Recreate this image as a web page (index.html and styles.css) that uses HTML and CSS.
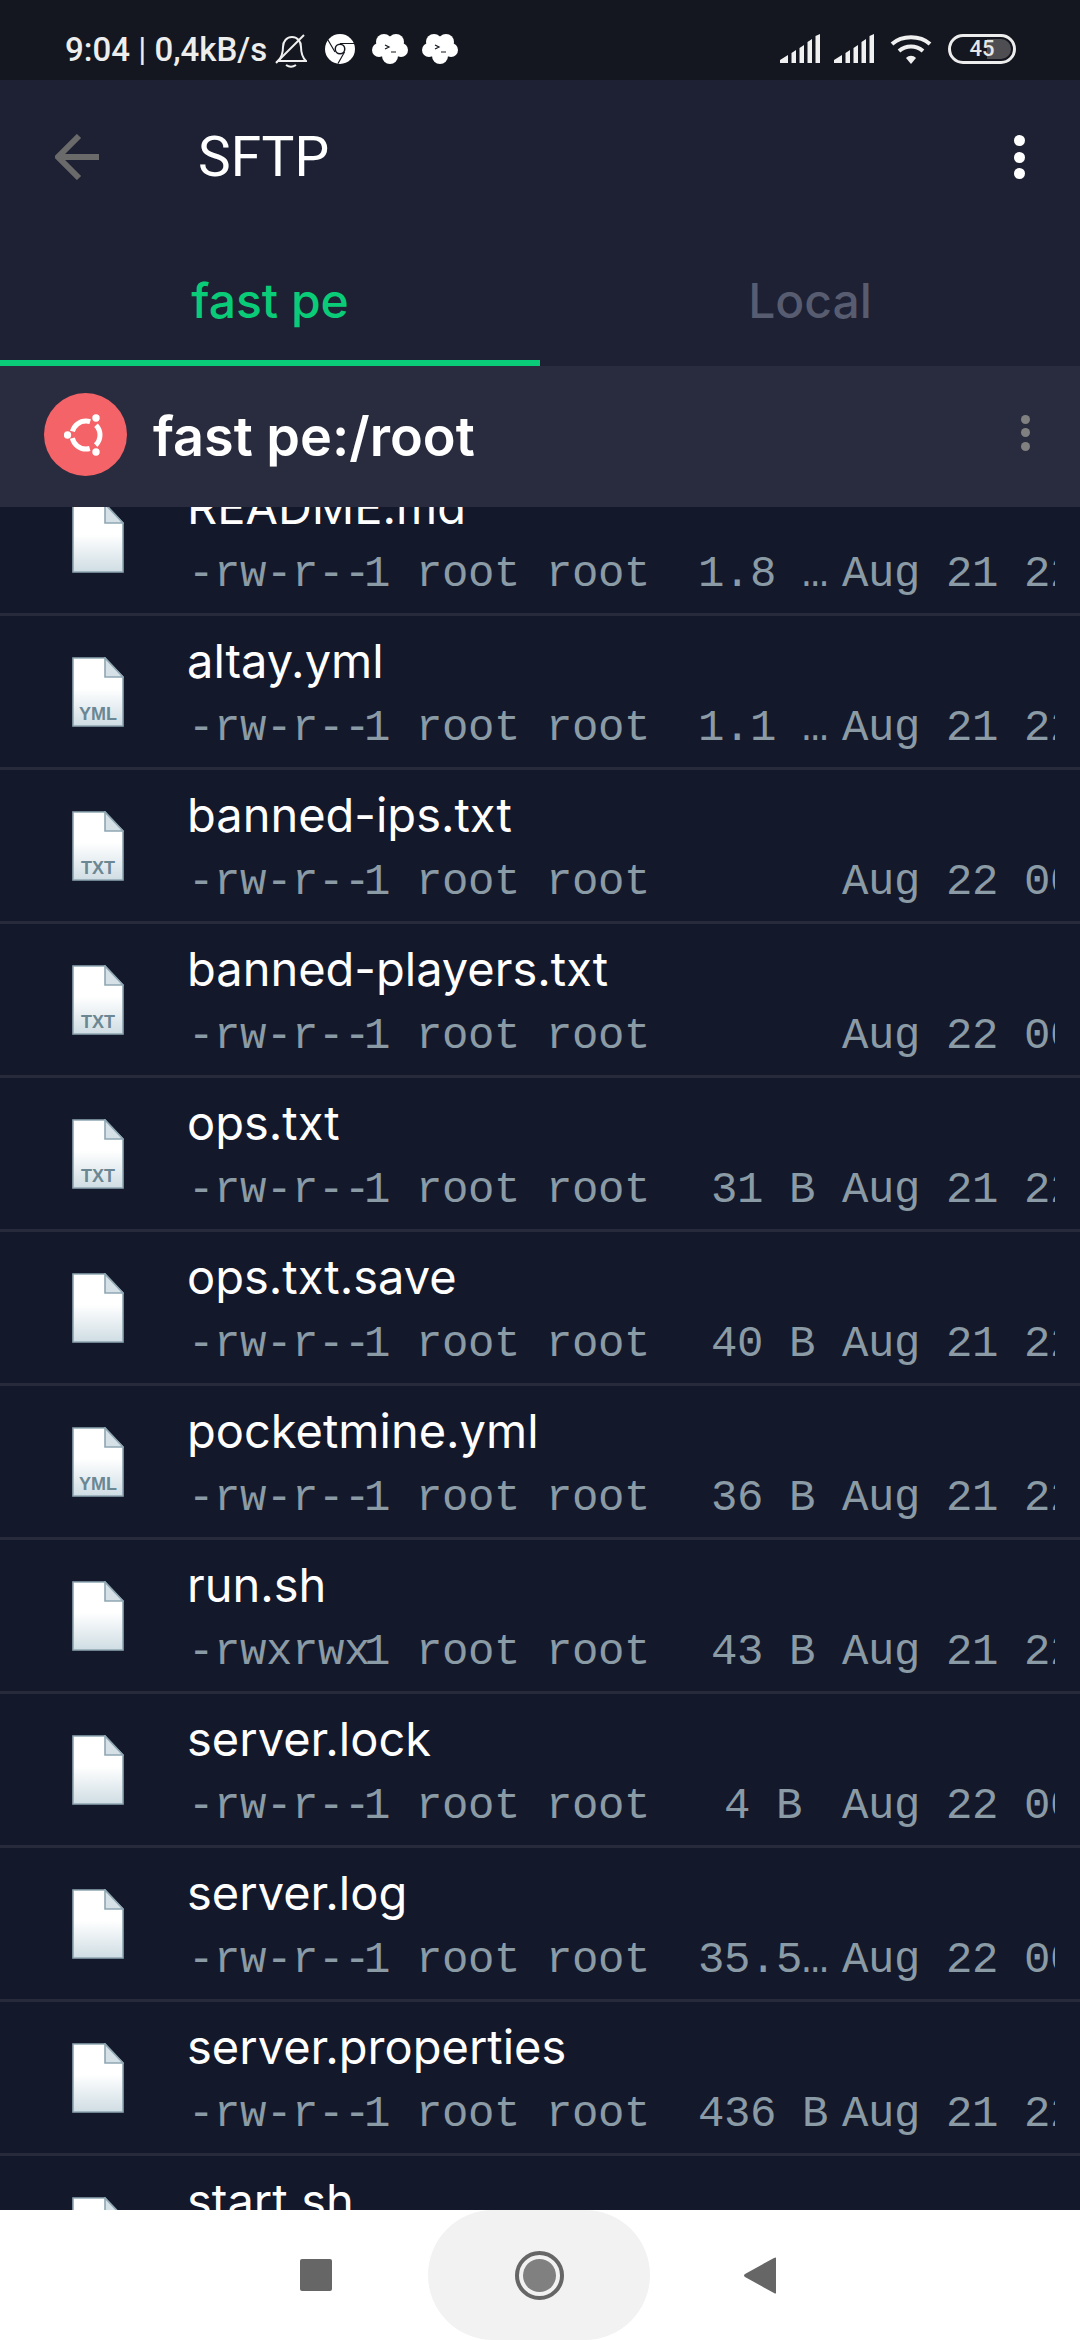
FILE: index.html
```html
<!DOCTYPE html>
<html lang="en">
<head>
    <meta charset="UTF-8">
    <meta name="viewport" content="width=device-width, initial-scale=1.0">
    <title>SFTP</title>
    <link rel="stylesheet" href="styles.css">
</head>
<body>
    <svg class="defs" width="0" height="0">
        <defs>
            <linearGradient id="paper" x1="0" y1="0" x2="0" y2="1">
                <stop offset="0.45" stop-color="#ffffff"/>
                <stop offset="1" stop-color="#cfdde3"/>
            </linearGradient>
            <symbol id="file" viewBox="0 0 52 70">
                <path d="M1 1H33L51 20V69H1Z" fill="url(#paper)" stroke="#8fa6b2" stroke-width="1.6"/>
                <path d="M33 1V20H51Z" fill="#d5e1e6" stroke="#8fa6b2" stroke-width="1.6"/>
            </symbol>
            <symbol id="cloud" viewBox="0 0 36 30">
                <circle cx="12" cy="8" r="8" fill="#fff"/>
                <circle cx="24" cy="8" r="8" fill="#fff"/>
                <circle cx="7" cy="16" r="7" fill="#fff"/>
                <circle cx="29" cy="16" r="7" fill="#fff"/>
                <circle cx="18" cy="22" r="8" fill="#fff"/>
                <circle cx="18" cy="15" r="9" fill="#fff"/>
                <path d="M13 11l4 2l-4 2M19 18h5" fill="none" stroke="#14171f" stroke-width="1.2"/>
            </symbol>
            <symbol id="signal" viewBox="0 0 40 29">
                <path d="M0 29V26L8 21V29ZM11.500 29V19L16 16V29ZM19.500 29V14L24 11V29ZM27.500 29V8L32 5V29ZM35.500 29V2L40 0V29Z" fill="#f0f0f0"/>
            </symbol>
        </defs>
    </svg>

    <div class="status-bar">
        <div class="status-left">
            <span class="status-text">9:04 <i>|</i> 0,4kB/s</span>
            <svg class="ic-bell" viewBox="0 0 32 34"><path d="M3 27c4-4 5-8 5-14c0-6 4-10 9-10s9 4 9 10c0 6 1 10 5 14Z M11 31c3 2 7 2 10 0" fill="none" stroke="#f0f0f0" stroke-width="2"/><path d="M1 29L29 1" stroke="#f0f0f0" stroke-width="2"/></svg>
            <svg class="ic-chrome" viewBox="0 0 30 30">
                <circle cx="15" cy="15" r="15" fill="#fff"/>
                <circle cx="15" cy="15" r="5.500" fill="#14171f"/>
                <circle cx="15" cy="15" r="4" fill="#fff"/>
                <path d="M15 9.500H29M10 18L3 6M19.500 18L13 29.500" stroke="#14171f" stroke-width="1.200"/>
            </svg>
            <svg class="ic-cloud"><use href="#cloud"/></svg>
            <svg class="ic-cloud"><use href="#cloud"/></svg>
        </div>
        <div class="status-right">
            <svg class="ic-signal"><use href="#signal"/></svg>
            <svg class="ic-signal"><use href="#signal"/></svg>
            <svg class="ic-wifi" viewBox="0 0 42 30">
                <path d="M2 10C12 1 30 1 40 10M9 17C16 11 26 11 33 17" fill="none" stroke="#f0f0f0" stroke-width="4"/>
                <path d="M16 24C19 21 23 21 26 24L21 30Z" fill="#f0f0f0"/>
            </svg>
            <div class="battery"><div class="battery-fill"></div><span>45</span></div>
        </div>
    </div>

    <header class="app-bar">
        <svg class="ic-back" viewBox="0 0 44 46"><path d="M44 23H4M24 2L3 23L24 44" fill="none" stroke="#6a6a6a" stroke-width="6"/></svg>
        <h1>SFTP</h1>
        <div class="dots dots-white"><b></b><b></b><b></b></div>
    </header>

    <nav class="tabs">
        <div class="tab tab-active">fast pe</div>
        <div class="tab">Local</div>
    </nav>

    <div class="path-bar">
        <div class="os-badge">
            <svg viewBox="0 0 44 44" width="44" height="44">
                <circle cx="22" cy="22" r="14" fill="none" stroke="#fff" stroke-width="5" stroke-dasharray="22.500 6.800" stroke-dashoffset="-18"/>
                <circle cx="3.500" cy="22" r="3.700" fill="#fff"/>
                <circle cx="32" cy="5" r="3.700" fill="#fff"/>
                <circle cx="32" cy="39" r="3.700" fill="#fff"/>
            </svg>
        </div>
        <div class="path-text">fast pe:/root</div>
        <div class="dots dots-grey"><b></b><b></b><b></b></div>
    </div>

    <main class="file-list">
        <div class="file-row">
            <div class="file-icon"><svg><use href="#file"/></svg></div>
            <div class="file-info">
                <div class="file-name">README.md</div>
                <div class="file-meta"><span class="perm">-rw-r--</span><span class="links">1</span><span class="owner">root root</span><span class="size">1.8 …</span><span class="date">Aug 21 22:14</span></div>
            </div>
        </div>
        <div class="file-row">
            <div class="file-icon"><svg><use href="#file"/></svg><span>YML</span></div>
            <div class="file-info">
                <div class="file-name">altay.yml</div>
                <div class="file-meta"><span class="perm">-rw-r--</span><span class="links">1</span><span class="owner">root root</span><span class="size">1.1 …</span><span class="date">Aug 21 22:14</span></div>
            </div>
        </div>
        <div class="file-row">
            <div class="file-icon"><svg><use href="#file"/></svg><span>TXT</span></div>
            <div class="file-info">
                <div class="file-name">banned-ips.txt</div>
                <div class="file-meta"><span class="perm">-rw-r--</span><span class="links">1</span><span class="owner">root root</span><span class="size"></span><span class="date">Aug 22 00:14</span></div>
            </div>
        </div>
        <div class="file-row">
            <div class="file-icon"><svg><use href="#file"/></svg><span>TXT</span></div>
            <div class="file-info">
                <div class="file-name">banned-players.txt</div>
                <div class="file-meta"><span class="perm">-rw-r--</span><span class="links">1</span><span class="owner">root root</span><span class="size"></span><span class="date">Aug 22 00:14</span></div>
            </div>
        </div>
        <div class="file-row">
            <div class="file-icon"><svg><use href="#file"/></svg><span>TXT</span></div>
            <div class="file-info">
                <div class="file-name">ops.txt</div>
                <div class="file-meta"><span class="perm">-rw-r--</span><span class="links">1</span><span class="owner">root root</span><span class="size">31 B</span><span class="date">Aug 21 22:14</span></div>
            </div>
        </div>
        <div class="file-row">
            <div class="file-icon"><svg><use href="#file"/></svg></div>
            <div class="file-info">
                <div class="file-name">ops.txt.save</div>
                <div class="file-meta"><span class="perm">-rw-r--</span><span class="links">1</span><span class="owner">root root</span><span class="size">40 B</span><span class="date">Aug 21 22:14</span></div>
            </div>
        </div>
        <div class="file-row">
            <div class="file-icon"><svg><use href="#file"/></svg><span>YML</span></div>
            <div class="file-info">
                <div class="file-name">pocketmine.yml</div>
                <div class="file-meta"><span class="perm">-rw-r--</span><span class="links">1</span><span class="owner">root root</span><span class="size">36 B</span><span class="date">Aug 21 22:14</span></div>
            </div>
        </div>
        <div class="file-row">
            <div class="file-icon"><svg><use href="#file"/></svg></div>
            <div class="file-info">
                <div class="file-name">run.sh</div>
                <div class="file-meta"><span class="perm">-rwxrwx</span><span class="links">1</span><span class="owner">root root</span><span class="size">43 B</span><span class="date">Aug 21 22:14</span></div>
            </div>
        </div>
        <div class="file-row">
            <div class="file-icon"><svg><use href="#file"/></svg></div>
            <div class="file-info">
                <div class="file-name">server.lock</div>
                <div class="file-meta"><span class="perm">-rw-r--</span><span class="links">1</span><span class="owner">root root</span><span class="size">4 B</span><span class="date">Aug 22 00:14</span></div>
            </div>
        </div>
        <div class="file-row">
            <div class="file-icon"><svg><use href="#file"/></svg></div>
            <div class="file-info">
                <div class="file-name">server.log</div>
                <div class="file-meta"><span class="perm">-rw-r--</span><span class="links">1</span><span class="owner">root root</span><span class="size">35.5…</span><span class="date">Aug 22 00:14</span></div>
            </div>
        </div>
        <div class="file-row">
            <div class="file-icon"><svg><use href="#file"/></svg></div>
            <div class="file-info">
                <div class="file-name">server.properties</div>
                <div class="file-meta"><span class="perm">-rw-r--</span><span class="links">1</span><span class="owner">root root</span><span class="size">436 B</span><span class="date">Aug 21 22:14</span></div>
            </div>
        </div>
        <div class="file-row">
            <div class="file-icon"><svg><use href="#file"/></svg></div>
            <div class="file-info">
                <div class="file-name">start.sh</div>
            </div>
        </div>
    </main>

    <footer class="nav-bar">
        <div class="nav-square"></div>
        <div class="nav-home"><div class="nav-circle"><div></div></div></div>
        <svg class="nav-back" viewBox="0 0 32 37"><path d="M32 1V36Q32 37 30 36L1 20Q-1 18.500 1 17L30 1Q32 0 32 1Z" fill="#666"/></svg>
    </footer>
</body>
</html>
```

FILE: styles.css
```css
html, body {
    margin: 0;
    padding: 0;
}
body {
    width: 1080px;
    height: 2340px;
    overflow: hidden;
    display: flex;
    flex-direction: column;
    font-family: 'Inter', sans-serif;
    background: #14182b;
    color: white;
}
.defs {
    display: block;
    height: 0;
}

/* status bar */
.status-bar {
    flex: none;
    height: 80px;
    background: #14171f;
    display: flex;
    justify-content: space-between;
    padding: 34px 64px 0 65px;
    box-sizing: border-box;
}
.status-left, .status-right {
    display: flex;
    align-items: flex-start;
}
.status-text {
    font-family: 'Roboto', sans-serif;
    font-weight: 500;
    font-size: 33px;
    line-height: 32px;
    color: #ededed;
    white-space: nowrap;
}
.status-text i {
    font-style: normal;
    font-weight: 400;
}
.ic-bell {
    width: 32px;
    height: 34px;
    margin-left: 8px;
}
.ic-chrome {
    width: 30px;
    height: 30px;
    margin-left: 18px;
}
.ic-cloud {
    width: 36px;
    height: 30px;
    margin-left: 14px;
}
.ic-chrome + .ic-cloud {
    margin-left: 17px;
}
.ic-signal {
    width: 40px;
    height: 29px;
    margin-right: 14px;
}
.ic-wifi {
    width: 42px;
    height: 30px;
    margin-left: 2px;
}
.battery {
    position: relative;
    width: 68px;
    height: 30px;
    margin-left: 16px;
    border: 3px solid #ededed;
    border-radius: 15px;
    box-sizing: border-box;
    font-family: 'Roboto', sans-serif;
    font-weight: 500;
    font-size: 22px;
    line-height: 24px;
    color: #e6e6e6;
    text-align: center;
}
.battery-fill {
    position: absolute;
    left: 2px;
    top: 2px;
    bottom: 2px;
    right: 2px;
    border-radius: 10px;
    background: linear-gradient(90deg, transparent 58%, #4e4e52 58%);
}
.battery span {
    position: relative;
}

/* app bar */
.app-bar {
    flex: none;
    height: 154px;
    background: #1d2133;
    display: flex;
    align-items: center;
    padding: 0 55px 0 55px;
    box-sizing: border-box;
}
.ic-back {
    width: 44px;
    height: 46px;
}
.app-bar h1 {
    flex: 1;
    margin: 0;
    padding-left: 99px;
    font-family: 'Roboto', sans-serif;
    font-weight: 400;
    font-size: 55px;
}
.dots {
    display: flex;
    flex-direction: column;
}
.dots b {
    display: block;
    border-radius: 50%;
}
.dots-white {
    gap: 5.500px;
}
.dots-white b {
    width: 11px;
    height: 11px;
    background: white;
}
.dots-grey {
    gap: 4.500px;
    margin-bottom: 8px;
}
.dots-grey b {
    width: 9px;
    height: 9px;
    background: #808080;
}

/* tabs */
.tabs {
    flex: none;
    display: flex;
    height: 132px;
    background: #1d2133;
}
.tab {
    width: 540px;
    box-sizing: border-box;
    padding-top: 40px;
    text-align: center;
    font-size: 48px;
    font-weight: 500;
    line-height: 54px;
    color: #575c70;
}
.tab-active {
    color: #0acb77;
    border-bottom: 6px solid #0acb77;
}

/* path bar */
.path-bar {
    flex: none;
    height: 141px;
    background: #292c3e;
    display: flex;
    align-items: center;
    padding: 0 50px 0 44px;
    box-sizing: border-box;
    position: relative;
    z-index: 1;
}
.os-badge {
    width: 83px;
    height: 83px;
    margin-bottom: 4px;
    border-radius: 50%;
    background: #f36368;
    display: flex;
    align-items: center;
    justify-content: center;
}
.path-text {
    flex: 1;
    margin-left: 26px;
    font-size: 54px;
    font-weight: 600;
    line-height: 60px;
}

/* file list */
.file-list {
    flex: 1;
    min-height: 0;
    overflow: hidden;
    background: #14182b;
}
.file-row {
    height: 154px;
    box-sizing: border-box;
    border-bottom: 3px solid #262a3b;
    display: flex;
}
.file-row:first-child {
    margin-top: -45px;
}
.file-icon {
    position: relative;
    width: 52px;
    height: 70px;
    margin: 41px 0 0 72px;
    flex: none;
}
.file-icon svg {
    display: block;
    width: 52px;
    height: 70px;
}
.file-icon span {
    position: absolute;
    left: 0;
    right: 0;
    bottom: 4px;
    text-align: center;
    font-family: 'Liberation Sans', sans-serif;
    font-weight: 700;
    font-size: 18px;
    line-height: 18px;
    color: #6b8794;
}
.file-info {
    flex: 1;
    min-width: 0;
    margin: 0 25px 0 64px;
    padding-top: 20px;
    overflow: hidden;
}
.file-name {
    margin-left: -1px;
    font-size: 47px;
    line-height: 50px;
    color: white;
    white-space: nowrap;
}
.file-meta {
    display: flex;
    margin-top: 17px;
    font-family: 'Liberation Mono', monospace;
    font-size: 44px;
    letter-spacing: -.4px;
    line-height: 50px;
    color: #8a9ba5;
    white-space: pre;
}
.file-meta span {
    display: block;
    flex: none;
}
.perm { width: 176px; }
.links { width: 52px; }
.owner { width: 282px; }
.size {
    width: 130px;
    margin-right: 14px;
    text-align: center;
}
.date { width: 320px; }

/* bottom nav */
.nav-bar {
    flex: none;
    height: 130px;
    padding-right: 4px;
    background: white;
    position: relative;
    z-index: 1;
    display: flex;
    align-items: center;
    justify-content: center;
}
.nav-square {
    width: 32px;
    height: 32px;
    border-radius: 2px;
    background: #666;
}
.nav-home {
    width: 222px;
    height: 130px;
    margin: 0 94px 0 96px;
    border-radius: 65px;
    background: #f2f2f2;
    display: flex;
    align-items: center;
    justify-content: center;
}
.nav-circle {
    width: 49px;
    height: 49px;
    box-sizing: border-box;
    border: 4px solid #666;
    border-radius: 50%;
    padding: 4px;
}
.nav-circle div {
    width: 100%;
    height: 100%;
    border-radius: 50%;
    background: #808080;
}
.nav-back {
    width: 32px;
    height: 37px;
}
```
